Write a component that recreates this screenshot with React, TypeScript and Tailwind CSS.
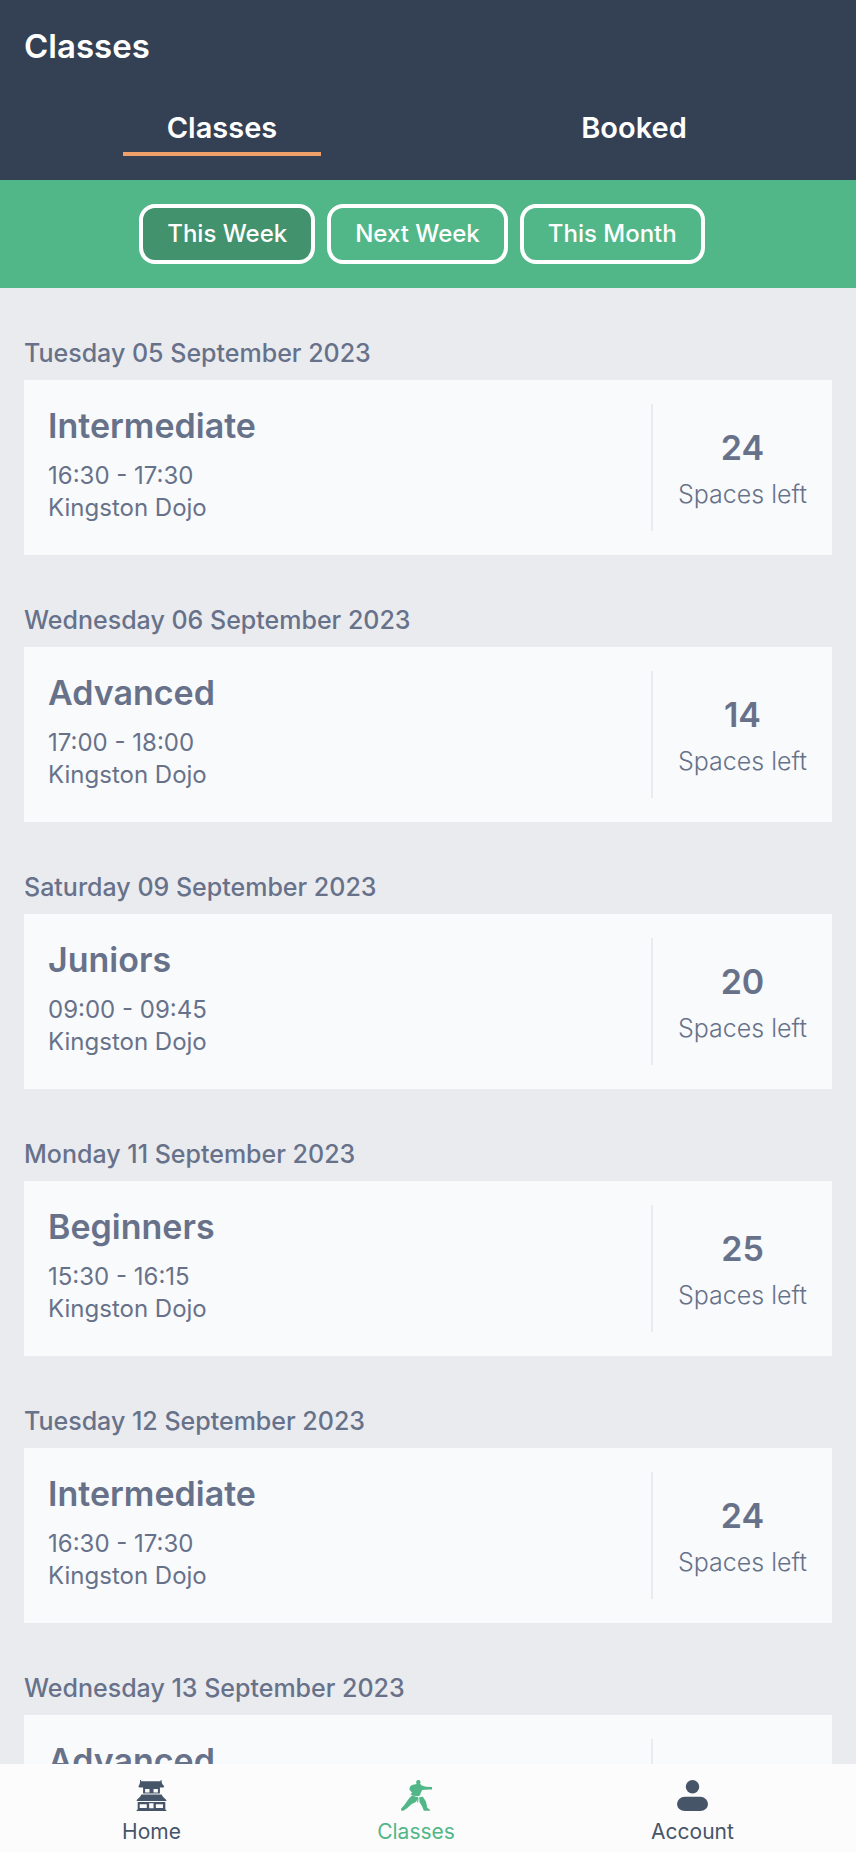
import clsx from "clsx";
import { useState } from "react";

type DojoClass = {
  date: string;
  name: string;
  time: string;
  location: string;
  spaces: number;
};

const classes: DojoClass[] = [
  { date: "Tuesday 05 September 2023", name: "Intermediate", time: "16:30 - 17:30", location: "Kingston Dojo", spaces: 24 },
  { date: "Wednesday 06 September 2023", name: "Advanced", time: "17:00 - 18:00", location: "Kingston Dojo", spaces: 14 },
  { date: "Saturday 09 September 2023", name: "Juniors", time: "09:00 - 09:45", location: "Kingston Dojo", spaces: 20 },
  { date: "Monday 11 September 2023", name: "Beginners", time: "15:30 - 16:15", location: "Kingston Dojo", spaces: 25 },
  { date: "Tuesday 12 September 2023", name: "Intermediate", time: "16:30 - 17:30", location: "Kingston Dojo", spaces: 24 },
  { date: "Wednesday 13 September 2023", name: "Advanced", time: "17:00 - 18:00", location: "Kingston Dojo", spaces: 14 },
];

const tabs = ["Classes", "Booked"];
const ranges = ["This Week", "Next Week", "This Month"];

function DojoIcon() {
  return (
    <svg viewBox="0 0 92 92" className="size-[31px]" fill="currentColor" fillRule="evenodd" aria-hidden="true">
      <path d="M12 0h3v4h58V0h3v5l2 7 6 7-3 3H71v18H21V22H10l-3-3 4-7 1-7zM27 27v10h13V27zm25 0v10h13V27z" />
      <path d="M16 43h60l4 7 10 9v3H2v-3l10-9z" />
      <path d="M5 65h82v23h3v4H2v-4h3zM11 72v11h21V72zm28-3v15h13V69zm20 3v11h21V72z" />
    </svg>
  );
}

function KarateIcon() {
  return (
    <svg viewBox="0 0 92 92" className="size-[31px]" fill="currentColor" aria-hidden="true">
      <path d="M46 12c-2-6-1-12 5-12 7 0 8 6 6 12l5 4 12 4 18 1v7l-20 1-9 1-5 9-1 6-7 3-13-1-9-5 5-4-8-9c0-8 3-12 8-14z" />
      <path d="M33 45l11 5 7 1-1 6-7 9-11 5-14 13-11 7H1l-1-6 10-11 12-17z" />
      <path d="M49 53l3 0-1 14h-3z" />
      <path d="M54 51l11-1 9 14 4 18 8 6v3H68l-6-14-7-11z" />
    </svg>
  );
}

function AccountIcon() {
  return (
    <svg viewBox="0 0 92 92" className="size-[31px]" fill="currentColor" aria-hidden="true">
      <circle cx="46" cy="20" r="20" />
      <rect y="50" width="92" height="42" rx="23" ry="21" />
    </svg>
  );
}

const navItems = [
  { label: "Home", icon: DojoIcon },
  { label: "Classes", icon: KarateIcon },
  { label: "Account", icon: AccountIcon },
];

function ClassCard({ item }: { item: DojoClass }) {
  return (
    <section className="pt-12">
      <h2 className="mb-2 text-[25px] leading-[34px] pb-0.5 font-medium">{item.date}</h2>
      <article className="flex bg-[#f9fafc] p-6">
        <div className="flex-1 pb-[7px]">
          <h3 className="mb-3 text-[34px] leading-[44px] font-semibold">{item.name}</h3>
          <p className="text-2xl leading-8">{item.time}</p>
          <p className="text-2xl leading-8">{item.location}</p>
        </div>
        <div className="flex min-w-[157px] flex-col items-center border-l-2 border-[#eaebef] pt-6 pl-6">
          <p className="text-[34px] leading-10 font-semibold">{item.spaces}</p>
          <p className="mt-2 text-[25px] leading-9 font-light">Spaces left</p>
        </div>
      </article>
    </section>
  );
}

export default function App() {
  const [tab, setTab] = useState("Classes");
  const [range, setRange] = useState("This Week");

  return (
    <div className="flex h-screen flex-col bg-[#eaebef] font-['Inter',sans-serif] text-[#67728a]">
      <header className="bg-[#344054] text-white">
        <h1 className="px-6 pt-6 text-[33px] leading-[44px] font-semibold">Classes</h1>
        <div className="flex px-4 pt-10 pb-6">
          {tabs.map((name) => (
            <div key={name} className="flex flex-1 justify-center">
              <button
                type="button"
                onClick={() => setTab(name)}
                className={clsx(
                  "w-[48%] border-b-4 pb-1 text-[29px] leading-10 font-semibold",
                  tab === name ? "border-[#f0a069]" : "border-transparent",
                )}
              >
                {name}
              </button>
            </div>
          ))}
        </div>
      </header>

      <div className="flex justify-center bg-[#52b788] py-6">
        {ranges.map((name) => (
          <button
            key={name}
            type="button"
            onClick={() => setRange(name)}
            className={clsx(
              "mr-3 rounded-2xl border-4 border-white px-6 py-2 text-2xl leading-9 font-medium text-white",
              range === name && "bg-[#42926d]",
            )}
          >
            {name}
          </button>
        ))}
      </div>

      <main className="min-h-0 flex-1 overflow-y-auto px-6 [scrollbar-width:none]">
        {classes.map((item) => (
          <ClassCard key={item.date} item={item} />
        ))}
      </main>

      <nav className="flex justify-around bg-[#fcfcfd] px-6 pt-4 pb-1">
        {navItems.map(({ label, icon: Icon }) => (
          <a
            key={label}
            href={`#${label.toLowerCase()}`}
            className={clsx(
              "flex flex-col items-center gap-[5px] text-[21px] leading-8",
              label === "Classes" ? "text-[#52b788]" : "text-[#475569]",
            )}
          >
            <Icon />
            {label}
          </a>
        ))}
      </nav>
    </div>
  );
}
